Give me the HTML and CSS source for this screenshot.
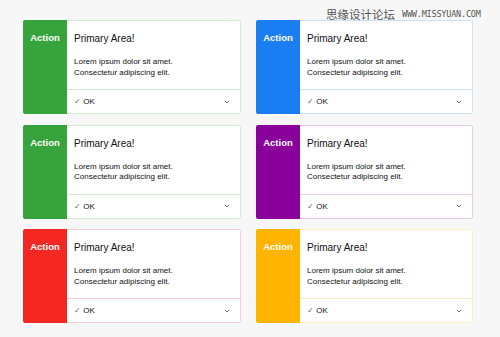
FILE: index.html
```html
<!DOCTYPE html>
<html lang="en">
  <head>
    <meta charset="UTF-8" />
    <title>Action Cards</title>
    <link rel="stylesheet" href="styles.css">
  </head>
  <body>
    <div class="watermark">
      <span class="wm-cn">思缘设计论坛</span>
      <span class="wm-en">WWW.MISSYUAN.COM</span>
    </div>

    <div class="grid">
      <!-- Row 1 -->
      <div class="card green">
        <div class="side">Action</div>
        <div class="main">
          <div class="body">
            <h3>Primary Area!</h3>
            <p>Lorem ipsum dolor sit amet.<br />Consectetur adipiscing elit.</p>
          </div>
          <div class="footer">
            <span class="ok"><span class="tick">✓</span> OK</span>
            <svg class="chev" width="6" height="4" viewBox="0 0 6 4"><path d="M1 1l2 2 2-2" fill="none" stroke="#777" stroke-width="1"/></svg>
          </div>
        </div>
      </div>

      <div class="card blue">
        <div class="side">Action</div>
        <div class="main">
          <div class="body">
            <h3>Primary Area!</h3>
            <p>Lorem ipsum dolor sit amet.<br />Consectetur adipiscing elit.</p>
          </div>
          <div class="footer">
            <span class="ok"><span class="tick">✓</span> OK</span>
            <svg class="chev" width="6" height="4" viewBox="0 0 6 4"><path d="M1 1l2 2 2-2" fill="none" stroke="#777" stroke-width="1"/></svg>
          </div>
        </div>
      </div>

      <!-- Row 2 -->
      <div class="card green">
        <div class="side">Action</div>
        <div class="main">
          <div class="body">
            <h3>Primary Area!</h3>
            <p>Lorem ipsum dolor sit amet.<br />Consectetur adipiscing elit.</p>
          </div>
          <div class="footer">
            <span class="ok"><span class="tick">✓</span> OK</span>
            <svg class="chev" width="6" height="4" viewBox="0 0 6 4"><path d="M1 1l2 2 2-2" fill="none" stroke="#777" stroke-width="1"/></svg>
          </div>
        </div>
      </div>

      <div class="card purple">
        <div class="side">Action</div>
        <div class="main">
          <div class="body">
            <h3>Primary Area!</h3>
            <p>Lorem ipsum dolor sit amet.<br />Consectetur adipiscing elit.</p>
          </div>
          <div class="footer">
            <span class="ok"><span class="tick">✓</span> OK</span>
            <svg class="chev" width="6" height="4" viewBox="0 0 6 4"><path d="M1 1l2 2 2-2" fill="none" stroke="#777" stroke-width="1"/></svg>
          </div>
        </div>
      </div>

      <!-- Row 3 -->
      <div class="card red">
        <div class="side">Action</div>
        <div class="main">
          <div class="body">
            <h3>Primary Area!</h3>
            <p>Lorem ipsum dolor sit amet.<br />Consectetur adipiscing elit.</p>
          </div>
          <div class="footer">
            <span class="ok"><span class="tick">✓</span> OK</span>
            <svg class="chev" width="6" height="4" viewBox="0 0 6 4"><path d="M1 1l2 2 2-2" fill="none" stroke="#777" stroke-width="1"/></svg>
          </div>
        </div>
      </div>

      <div class="card yellow">
        <div class="side">Action</div>
        <div class="main">
          <div class="body">
            <h3>Primary Area!</h3>
            <p>Lorem ipsum dolor sit amet.<br />Consectetur adipiscing elit.</p>
          </div>
          <div class="footer">
            <span class="ok"><span class="tick">✓</span> OK</span>
            <svg class="chev" width="6" height="4" viewBox="0 0 6 4"><path d="M1 1l2 2 2-2" fill="none" stroke="#777" stroke-width="1"/></svg>
          </div>
        </div>
      </div>
    </div>
  </body>
</html>
```

FILE: styles.css
```css
/* Global */
* {
  margin: 0;
  padding: 0;
  box-sizing: border-box;
}
body {
  font-family: "Liberation Sans", Arial, sans-serif;
  background: #f7f7f7;
  width: 500px;
  height: 337px;
  overflow: hidden;
  position: relative;
}

/* Watermark in the corner */
.watermark {
  position: absolute;
  top: 7px;
  left: 326px;
  display: flex;
  align-items: center;
  gap: 7px;
  color: #555;
}
.wm-cn {
  font-family: "Noto Sans CJK SC", sans-serif;
  font-size: 11.5px;
  line-height: 14px;
}
.wm-en {
  font-family: "DejaVu Sans Mono", monospace;
  font-size: 8.5px;
  letter-spacing: -0.2px;
}

/* Card grid */
.grid {
  display: grid;
  grid-template-columns: 218px 217px;
  grid-auto-rows: 94px;
  column-gap: 15px;
  row-gap: 10.5px;
  padding: 20px 0 0 23px;
}

.card {
  display: flex;
  border-radius: 2px;
  overflow: hidden;
  background: white;
}

.side {
  width: 44px;
  flex-shrink: 0;
  color: white;
  font-weight: bold;
  font-size: 9.5px;
  text-align: center;
  padding-top: 12px;
}

.main {
  flex: 1;
  display: flex;
  flex-direction: column;
  border: 1px solid #ddd;
  border-left: none;
  border-radius: 0 2px 2px 0;
}

.body {
  flex: 1;
  padding: 12px 7px 0;
}

.body h3 {
  font-size: 10px;
  font-weight: normal;
  line-height: 12px;
  color: #111;
}

.body p {
  margin-top: 12px;
  font-size: 8px;
  line-height: 10.5px;
  color: #111;
}

.footer {
  height: 24px;
  border-top: 1px solid #ddd;
  display: flex;
  align-items: center;
  justify-content: space-between;
  padding: 0 10px 0 7px;
  font-size: 8px;
  color: #111;
}

.tick {
  color: #666;
  font-size: 8px;
}

/* Colours */
.green .side { background: #37a33b; }
.green .main, .green .footer { border-color: #d2edd2; }
.blue .side { background: #1a7ef2; }
.blue .main, .blue .footer { border-color: #cde2fa; }
.purple .side { background: #8a009b; }
.purple .main, .purple .footer { border-color: #e9cbee; }
.red .side { background: #f52723; }
.red .main, .red .footer { border-color: #f9cfcf; }
.yellow .side { background: #ffb400; }
.yellow .main, .yellow .footer { border-color: #fcebbe; }
```
